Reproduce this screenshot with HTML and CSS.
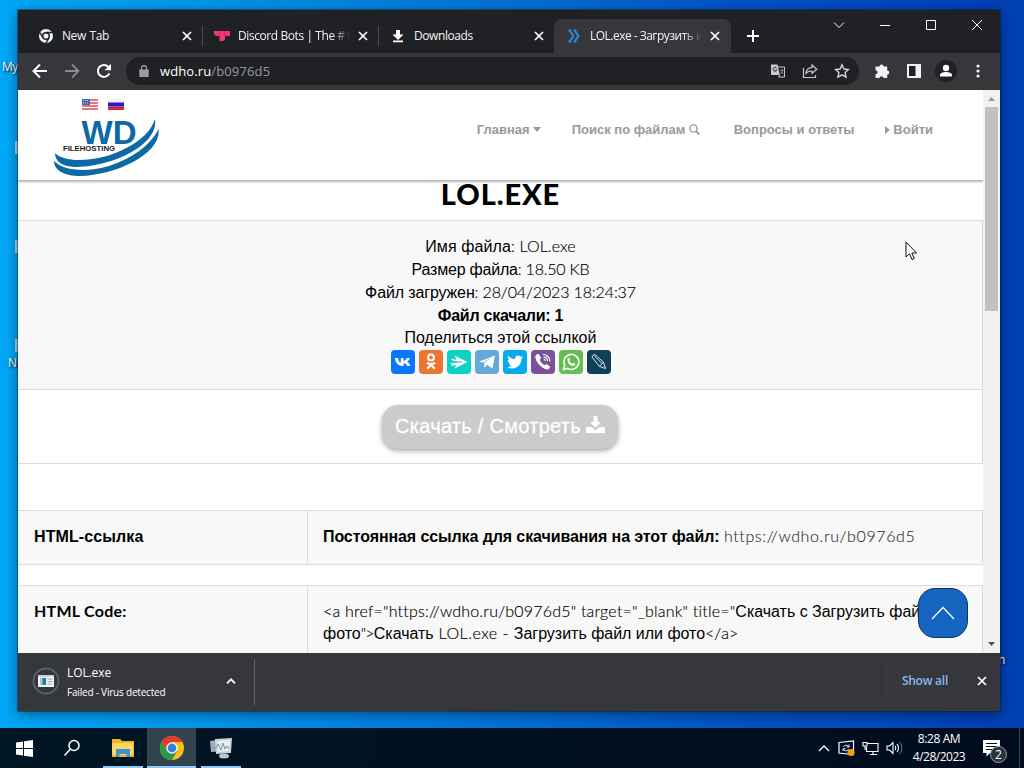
FILE: index.html
```
<!DOCTYPE html>
<html lang="ru">
<head>
    <meta charset="utf-8">
    <title>LOL.exe - Загрузить файл</title>
    <link rel="stylesheet" href="styles.css">
</head>
<body>
<div class="desktop">
    <span class="desk-label label-my">My</span>
    <span class="desk-label label-n">N</span>
    <span class="desk-label label-right">n</span>
    <i class="desk-sliver sliver-1"></i>
    <i class="desk-sliver sliver-2"></i>
    <i class="desk-sliver sliver-3"></i>

    <div class="window">
        <div class="tabstrip">
            <div class="tab">
                <svg class="tab-icon" viewBox="0 0 16 16"><circle cx="8" cy="8" r="7" fill="#f1f3f4"/><circle cx="8" cy="8" r="3.3" fill="#f1f3f4" stroke="#202124" stroke-width="1.5"/><path d="M8 4.500h7M4.900 9.700L1.500 4M11 9.800L7.600 15.500" stroke="#202124" stroke-width="1.4"/></svg>
                <span class="tab-title t-new">New Tab</span>
                <svg class="close" viewBox="0 0 10 10"><path d="M1 1l8 8M9 1L1 9"/></svg>
            </div>
            <div class="tab split">
                <svg class="tab-icon" viewBox="0 0 16 16"><path d="M0 3h16v5h-5v3.500L9.500 13H5.500V8H2L0 6z" fill="#f03a70"/><path d="M5.500 3v5M11 3v5" stroke="#bb2354" stroke-width=".7"/></svg>
                <span class="tab-title fade t-discord">Discord Bots | The #1</span>
                <svg class="close" viewBox="0 0 10 10"><path d="M1 1l8 8M9 1L1 9"/></svg>
            </div>
            <div class="tab split">
                <svg class="tab-icon" viewBox="0 0 16 16"><path d="M6 2h4v4.500h3.500L8 12 2.500 6.500H6zM3 12.500h10v1.800H3z" fill="#fff"/></svg>
                <span class="tab-title t-down">Downloads</span>
                <svg class="close" viewBox="0 0 10 10"><path d="M1 1l8 8M9 1L1 9"/></svg>
            </div>
            <div class="tab active">
                <svg class="tab-icon" viewBox="0 0 16 16"><path d="M3 1.500L7.500 8 3 14.500M8 1.500L12.500 8 8 14.500" fill="none" stroke="#2a86cf" stroke-width="2.200"/></svg>
                <span class="tab-title fade t-lol">LOL.exe - Загрузить и</span>
                <svg class="close" viewBox="0 0 10 10"><path d="M1 1l8 8M9 1L1 9"/></svg>
            </div>
            <svg class="new-tab" viewBox="0 0 12 12"><path d="M6 0v12M0 6h12" stroke="#fff" stroke-width="2"/></svg>
            <div class="caption">
                <svg viewBox="0 0 46 30"><path d="M18 12.500l5 5 5-5"/></svg>
                <svg viewBox="0 0 46 30"><path d="M18 15.500h10"/></svg>
                <svg viewBox="0 0 46 30"><path d="M18.500 10.500h9v9h-9z"/></svg>
                <svg viewBox="0 0 46 30"><path d="M18 10l10 10M28 10L18 20"/></svg>
            </div>
        </div>

        <div class="toolbar">
            <svg class="nav" viewBox="0 0 16 16"><path d="M15 8H2M8 1.500L1.500 8 8 14.500" fill="none" stroke="#fff" stroke-width="2"/></svg>
            <svg class="nav" viewBox="0 0 16 16"><path d="M1 8h13M8 1.500L14.500 8 8 14.500" fill="none" stroke="#8a8b8e" stroke-width="1.800"/></svg>
            <svg class="nav" viewBox="0 0 16 16"><path d="M13.300 10.500A6 6 0 1 1 12.300 3.800" fill="none" stroke="#fff" stroke-width="2"/><path d="M15 .8v6.400H8.600z" fill="#fff"/></svg>
            <div class="omnibox">
                <svg class="lock" viewBox="0 0 10 12"><path d="M2.500 5V3a2.500 2.500 0 0 1 5 0v2" fill="none" stroke="#9b9da0" stroke-width="1.300"/><path d="M1 4.500h8a.7.7 0 0 1 .7.700v6a.7.700 0 0 1-.7.700H1a.7.700 0 0 1-.7-.7v-6a.7.700 0 0 1 .7-.7z" fill="#9b9da0"/></svg>
                <span class="url"><b>wdho.ru</b>/b0976d5</span>
                <svg class="omni-icon" viewBox="0 0 16 16"><path d="M1 1.500h6.500L9.800 12H1z" fill="#c7c9cc"/><path d="M8 4h6.500v10H8.500l1.300-2" fill="none" stroke="#c7c9cc"/><path d="M6.500 5a2 2 0 1 0 .3 2H5" fill="none" stroke="#303134"/><path d="M10 7h3.500M12.500 7c0 1.500-1 3-2 4M11 8.500l2.500 2.500" fill="none" stroke="#aaa" stroke-width=".8"/></svg>
                <svg class="omni-icon" viewBox="0 0 16 16"><path d="M1.500 5v9.500h12V12M10 2l4.800 4.200L10 10.500V8C7 8 5 8.800 3.800 11 4 7 6.500 4.800 10 4.400z" fill="none" stroke="#c7c9cc" stroke-width="1.200"/></svg>
                <svg class="omni-icon" viewBox="0 0 16 16"><path d="M8 1.800l1.900 4.200 4.500.5-3.300 3.100.9 4.500-4-2.300-4 2.300.9-4.500L1.600 6.500 6.100 6z" fill="none" stroke="#d2d4d6" stroke-width="1.400"/></svg>
            </div>
            <svg class="ext" viewBox="0 0 16 16"><path d="M1.500 3.500h4a2.100 2.100 0 1 1 4.200 0h3.500v4a2.100 2.100 0 1 1 0 4.200V15H9.700a2.200 2.200 0 0 0-4.300 0H1.500v-3.700a2 2 0 0 0 0-4z" fill="#f1f3f4"/></svg>
            <svg class="ext side" viewBox="0 0 16 16"><path d="M2 2h12v12H2z" fill="#202124" stroke="#f1f3f4" stroke-width="2"/><path d="M9.500 1H15v14H9.500z" fill="#f1f3f4"/></svg>
            <svg class="avatar" viewBox="0 0 22 22"><circle cx="11" cy="11" r="11" fill="#202124"/><circle cx="11" cy="8" r="3.200" fill="#fff"/><path d="M5 16.500v-1.300c0-2.200 3-3.200 6-3.200s6 1 6 3.200v1.300z" fill="#fff"/></svg>
            <svg class="dots" viewBox="0 0 4 16"><circle cx="2" cy="3" r="1.600"/><circle cx="2" cy="8" r="1.600"/><circle cx="2" cy="13" r="1.600"/></svg>
        </div>

        <div class="viewport">
            <div class="page">
                <div class="site-header">
                    <svg class="logo" viewBox="0 0 108 84">
                        <g>
                            <path d="M29 4h16v11H29z" fill="#fff"/><path d="M29 5h16M29 8h16M29 11h16M29 14h16" stroke="#dc4b50" stroke-width="1.500"/><path d="M29 4h8v6h-8z" fill="#4069b4"/><path d="M30 5.500h6M30 8h6" stroke="#dfe7f6" stroke-width=".8" stroke-dasharray="1 1"/>
                            <path d="M55 4h16v11H55z" fill="#f1f1f6"/><path d="M55 7.500h16v4H55z" fill="#2519d8"/><path d="M55 11.500h16V15H55z" fill="#d92035"/>
                        </g>
                        <text x="28.500" y="49" class="wd" textLength="55" lengthAdjust="spacingAndGlyphs">WD</text>
                        <text x="10" y="56" class="fh" textLength="52" lengthAdjust="spacingAndGlyphs">FILEHOSTING</text>
                        <path d="M102 24C97 40 79 53 54 61 32 66.500 11 67 2 58 2 67 10 72 24 72 62 71 106 49 102 24z" fill="#0d69a5"/>
                        <path d="M105.500 34C98 50 78 64 56 71 33 77.500 11 76 1 66 1 75 11 81 27 81 64 80 109 58 105.500 34z" fill="#0d69a5"/>
                    </svg>
                    <nav class="menu">
                        <span class="m-home">Главная <svg class="caret" viewBox="0 0 8 5"><path d="M0 0h8L4 5z"/></svg></span>
                        <span class="m-search">Поиск по файлам <svg class="mag" viewBox="0 0 11 11"><circle cx="4.500" cy="4.500" r="3.600" fill="none" stroke="#999" stroke-width="1.400"/><path d="M7 7l3.500 3.500" stroke="#999" stroke-width="1.800"/></svg></span>
                        <span class="m-faq">Вопросы и ответы</span>
                        <span class="m-login"><svg class="tri" viewBox="0 0 5 8"><path d="M0 0l5 4-5 4z"/></svg> Войти</span>
                    </nav>
                </div>
                <h1><span>LOL.EXE</span></h1>
                <div class="info">
                    <p class="p-name">Имя файла<span class="lat">: LOL.exe</span></p>
                    <p class="p-size">Размер файла<span class="lat">: 18.50 KB</span></p>
                    <p class="p-date">Файл загружен<span class="lat">: 28/04/2023 18:24:37</span></p>
                    <p class="p-count"><b>Файл скачали: 1</b></p>
                    <p class="share-title">Поделиться этой ссылкой</p>
                    <div class="share">
                        <svg class="vk" viewBox="0 0 24 24"><path d="M4 8h3.200c.1 3 1.400 4.500 2.600 4.800V8h2.800v2.900c1.400-.2 2.600-1.500 3.100-2.900h3.100c-.4 1.700-1.600 3-2.600 3.700 1 .5 2.600 1.800 3.300 4.300h-3.200c-.5-1.400-1.800-2.500-3.700-2.700V16C7.500 16.300 4.200 13 4 8z" fill="#fff"/></svg>
                        <svg class="ok" viewBox="0 0 24 24" fill="none" stroke="#fff" stroke-width="2"><circle cx="12" cy="7.500" r="2.900"/><path d="M7.800 12.800c2.800 1.700 5.600 1.700 8.400 0M8.300 18.800l3.700-4 3.700 4"/></svg>
                        <svg class="mm" viewBox="0 0 24 24"><path d="M7.500 5.500l13 6.500-13 6.500 2-4.500H4v-1.200h9L4.500 10V8.500l5 1.500z" fill="#fff"/><path d="M4.500 15.500l8-2.500" stroke="#fff" stroke-width="1.500"/><path d="M5 11.400l10 .6-10 .9" stroke="#0bd2c3" stroke-width=".6" fill="none"/></svg>
                        <svg class="tg" viewBox="0 0 24 24"><path d="M4 11.700L20 5.500l-2.700 13-5-3.700-2.800 2.600-.6-4.600 7.600-5.200-9 5z" fill="#fff"/></svg>
                        <svg class="tw" viewBox="0 0 24 24"><path d="M20 7.500l-1.700 1.700C18.500 15 13.500 18.500 9.500 18.500c-2 0-3.800-.5-5.300-1.500 1.800.1 3.300-.3 4.500-1.300-1.500-.2-2.500-1-3-2.200h1.300C5.500 12.500 4.700 11.300 4.700 9.700l1.500.4C4.800 8.800 4.700 7.200 5.400 5.800 7.200 7.900 9.400 9 12 9.200 11.600 6 15.300 4.400 17.400 6.600l2.100-.8-1.300 1.900z" fill="#fff"/></svg>
                        <svg class="vb" viewBox="0 0 24 24"><path d="M5.500 4.500l2.200-.5 2.500 4-1.500 1.800c.8 2.300 2.200 4 4.700 5.400l1.900-1.300 3.700 2.600c-.3 2.200-1.600 3.300-3.400 2.900C10.500 18.200 5 12.500 4.200 6.500z" fill="#fff"/><path d="M12 4.500c4 .1 7 3 7 7M12.500 7c2.500.1 4 1.600 4 4M12.700 9.200c1 .1 1.600.7 1.700 1.700" fill="none" stroke="#fff" stroke-width="1.200"/></svg>
                        <svg class="wa" viewBox="0 0 24 24"><path d="M4.500 19.500l1.200-4.200A7.500 7.500 0 1 1 8.700 18.400z" fill="none" stroke="#fff" stroke-width="1.500"/><path d="M8.500 8h1.800l.9 2.200-.8 1.100c.6 1.100 1.500 1.900 2.600 2.500l1.100-1.100 2.100 1c0 1.500-.9 2.300-2.300 2.200-3.200-.4-5.200-3-5.400-5.700z" fill="#fff"/></svg>
                        <svg class="lj" viewBox="0 0 24 24"><path d="M5 7c.4-1.500 1.500-2.300 3-2.500l8.500 7.700 2 6.300-6.200-2.200zM16.500 12.200l-4.200 4.100M7 5.500l8 8" fill="none" stroke="#dce6eb"/></svg>
                    </div>
                </div>
                <div class="action">
                    <a class="download"><span>Скачать / Смотреть</span>
                        <svg viewBox="0 0 19 18"><path d="M7.500 0h4v6H15l-5.500 5.500L4 6h3.500z" fill="#fff"/><path d="M0 11h5.500l4 3.500 4-3.500H19v6H0z" fill="#fff"/></svg>
                    </a>
                </div>
                <div class="row link-row">
                    <div class="cell-name"><b class="k-link">HTML-ссылка</b></div>
                    <div class="cell-value"><b class="k-perm">Постоянная ссылка для скачивания на этот файл:</b> <span class="lat link">https://wdho.ru/b0976d5</span></div>
                </div>
                <div class="row code-row">
                    <div class="cell-name"><b class="lat-b">HTML Code:</b></div>
                    <div class="cell-value"><span class="lat code-a">&lt;a href="https://wdho.ru/b0976d5" target="_blank" title="</span><span class="cyr">Скачать с Загрузить файл</span><br><span class="cyr">фото</span><span class="lat code-q">"&gt;</span><span class="cyr">Скачать</span><span class="lat code-b"> LOL.exe - </span><span class="cyr">Загрузить файл или фото</span><span class="lat">&lt;/a&gt;</span></div>
                </div>
                <a class="to-top"><svg viewBox="0 0 24 14"><path d="M1 13L12 1.500 23 13" fill="none" stroke="#fff" stroke-width="1.300"/></svg></a>
            </div>
            <div class="scrollbar">
                <svg viewBox="0 0 17 17"><path d="M5 11l3.500-4 3.500 4z" fill="#9a9a9a"/></svg>
                <div class="thumb"></div>
                <svg class="down" viewBox="0 0 17 17"><path d="M5 6h7l-3.500 4z" fill="#505050"/></svg>
            </div>
        </div>

        <div class="shelf">
            <svg class="file-icon" viewBox="0 0 28 28"><circle cx="14" cy="14" r="12.500" fill="none" stroke="#576373" stroke-width="1.800"/><path d="M6 8h16v12H6z" fill="#f2f5f7"/><path d="M6 8h16v2H6z" fill="#c5d2da"/><path d="M8 11h6v7H8z" fill="#237e9d"/><path d="M8 11h2.500v7H8z" fill="#9bcbdc"/><path d="M15.500 12h5M15.500 14.500h5M15.500 17h5" stroke="#8aa2b1"/></svg>
            <div class="file">
                <div class="file-name">LOL.exe</div>
                <div class="file-state">Failed - Virus detected</div>
            </div>
            <svg class="chev" viewBox="0 0 10 6"><path d="M1 5.300L5 1.300l4 4" fill="none" stroke="#fff" stroke-width="1.700"/></svg>
            <span class="shelf-line"></span>
            <span class="show-all"><span>Show all</span></span>
            <svg class="close" viewBox="0 0 10 10"><path d="M1 1l8 8M9 1L1 9"/></svg>
        </div>
    </div>

    <svg class="cursor" viewBox="0 0 13 20"><path d="M1 1v15l3.500-3.300L7 18.500l2.300-1-2.500-5.500h4.700z" fill="#fff" stroke="#111"/></svg>

    <div class="taskbar">
        <div class="task"><svg width="17" height="17" viewBox="0 0 17 17"><path d="M0 2.500l7-1V8H0zM8 1.300L17 0v8H8zM0 9h7v6.500l-7-1zM8 9h9v8l-9-1.300z" fill="#fff"/></svg></div>
        <div class="task search"><svg width="18" height="18" viewBox="0 0 18 18"><circle cx="11" cy="6.500" r="5" fill="none" stroke="#fff" stroke-width="1.500"/><path d="M7.500 10L1.500 16.500" stroke="#fff" stroke-width="1.500"/></svg></div>
        <div class="task open"><svg width="24" height="20" viewBox="0 0 24 20"><path d="M1 1h8l2 2h12v16H1z" fill="#f0b52e"/><path d="M1 5h21v12H1z" fill="#ffd666"/><path d="M5 11h14v8h-3.500v-3h-7v3H5z" fill="#3d95cc"/></svg></div>
        <div class="task open current"><svg width="24" height="24" viewBox="0 0 24 24"><circle cx="12" cy="12" r="12" fill="#fbc116"/><path d="M1.600 6A12 12 0 0 1 22.400 6H12L6.800 15z" fill="#e33b2e"/><path d="M1.600 6A12 12 0 0 0 12 24l5.200-9H12l-5.200 0z" fill="#27994a"/><circle cx="12" cy="12" r="5.700" fill="#fff"/><circle cx="12" cy="12" r="4.400" fill="#367de2"/></svg></div>
        <div class="task open"><svg width="24" height="22" viewBox="0 0 24 22"><path d="M1 4l14-2 1 12-14 1z" fill="#a3b1b6"/><path d="M6 2l17-1-1 15-15 1z" fill="#c9d4d8"/><path d="M8 4l13-1-1 11-11 1z" fill="#e6eef0"/><path d="M3 11h4l2-4 3 6 2-7 2 6 2-3 2 3" fill="none" stroke="#7b96a0"/><ellipse cx="15" cy="19" rx="5" ry="2.500" fill="#bcc7cb"/></svg></div>
        <div class="tray">
            <svg width="12" height="8" viewBox="0 0 12 8"><path d="M1 7l5-5 5 5" fill="none" stroke="#fff" stroke-width="1.300"/></svg>
            <svg width="17" height="16" viewBox="0 0 17 16"><path d="M1 2.500L15.500 1v13.500L1 13z" fill="none" stroke="#fff" stroke-width="1.200"/><path d="M11 4.500V7H8.500M5 11V8.800h2.500M5.300 7c1-2 3.700-2.500 5.300-.5M10.700 9c-1 2-3.700 2.500-5.300.5" fill="none" stroke="#fff"/><circle cx="13" cy="12.500" r="3.500" fill="#f79a18"/></svg>
            <svg width="17" height="16" viewBox="0 0 17 16"><path d="M5 3.500h11v8H4.500V7M8 14.500h7M11 11.500v3M1 2.500h4V6H1zM3 6v4" fill="none" stroke="#fff" stroke-width="1.100"/></svg>
            <svg width="17" height="14" viewBox="0 0 17 14"><path d="M1 5h2.500L7 1.500v11L3.500 9H1z" fill="none" stroke="#fff" stroke-width="1.100"/><path d="M9 5c1 1 1 3 0 4M11 3c2 2 2 6 0 8" fill="none" stroke="#fff" stroke-width="1.100"/><path d="M13.500 1c3 3 3 9 0 12" fill="none" stroke="#7c858d"/></svg>
        </div>
        <div class="clock"><span class="time">8:28 AM</span><span class="day">4/28/2023</span></div>
        <div class="notify">
            <svg width="17" height="17" viewBox="0 0 17 17"><path d="M0 0h17v13H7l-3.500 3.500V13H0z" fill="#fff"/><path d="M3 3.500h11M3 6.500h11M3 9.500h7" stroke="#000c1e"/></svg>
            <span class="badge">2</span>
        </div>
    </div>
</div>
</body>
</html>
```
FILE: styles.css
```
body {
    margin: 0;
    overflow: hidden;
    font-family: "Open Sans", sans-serif;
}
* {
    box-sizing: border-box;
}
svg {
    display: block;
    flex: none;
}
.desktop {
    position: relative;
    width: 1024px;
    height: 768px;
    overflow: hidden;
    background: linear-gradient(90deg, #00a6f6 0, #009bed 15%, #0078d8 45%, #0056c6 70%, #0044ba 92%, #003eb4 100%);
}
.desk-label {
    position: absolute;
    color: #fff;
    font-size: 12px;
    line-height: 14px;
    text-shadow: 1px 1px 2px #000;
}
.label-my { left: 2px; top: 60px; letter-spacing: -.5px; }
.label-n { left: 8px; top: 356px; }
.label-right { left: 998px; top: 653px; }
.desk-sliver {
    position: absolute;
    left: 15px;
    width: 3px;
    height: 13px;
    background: #a5d5ee;
}
.sliver-1 { top: 141px; }
.sliver-2 { top: 240px; }
.sliver-3 { top: 339px; }

/* browser window */
.window {
    position: absolute;
    left: 18px;
    top: 10px;
    width: 982px;
    height: 701px;
    display: flex;
    flex-direction: column;
    background: #fff;
    box-shadow: 0 0 0 1px rgba(10, 30, 50, .45), 0 3px 12px rgba(0, 0, 0, .45);
}
.tabstrip {
    height: 43px;
    padding: 9px 0 0 8px;
    display: flex;
    background: #202124;
}
.tab {
    position: relative;
    width: 176px;
    height: 34px;
    padding: 0 10px 0 12px;
    display: flex;
    align-items: center;
    color: #f1f3f4;
    font-size: 12px;
}
.tab.split {
    padding-left: 11px;
}
.tab.split::before {
    content: '';
    width: 1px;
    height: 20px;
    margin: 0 0 0 -11px;
    background: #4a4c50;
}
.tab.split .tab-icon {
    margin-left: 11px;
}
.tab.active {
    width: 177px;
    padding-right: 11px;
    background: #36373a;
    border-radius: 8px 8px 0 0;
}
.tab-icon {
    width: 16px;
    height: 16px;
}
.tab-title {
    width: 113px;
    margin: -1px 0 0 8px;
    overflow: hidden;
    white-space: nowrap;
}
.tab.split .tab-title,
.tab.active .tab-title {
    width: 112px;
}
.t-new { letter-spacing: -.8px; word-spacing: 1px; }
.t-new, .t-discord, .t-down { letter-spacing: -.42px; }
.t-lol { letter-spacing: -.52px; }
.fade {
    -webkit-mask-image: linear-gradient(90deg, #000 84%, transparent 100%);
    mask-image: linear-gradient(90deg, #000 84%, transparent 100%);
}
.close {
    width: 10px;
    height: 10px;
    margin-left: auto;
    fill: none;
    stroke: #fff;
    stroke-width: 1.7;
}
.new-tab {
    width: 12px;
    height: 12px;
    margin: 11px 0 0 16px;
}
.caption {
    display: flex;
    margin: -9px 0 0 auto;
}
.caption svg {
    width: 46px;
    height: 30px;
    fill: none;
    stroke: #fff;
}
.toolbar {
    height: 37px;
    padding: 0 20px 2px 14px;
    display: flex;
    align-items: center;
    background: #36373a;
}
.nav {
    width: 16px;
    height: 16px;
    margin-right: 16px;
}
.omnibox {
    width: 733px;
    height: 28px;
    margin-left: -2px;
    padding: 0 9px 0 13px;
    display: flex;
    align-items: center;
    background: #202124;
    border-radius: 14px;
}
.lock {
    width: 10px;
    height: 12px;
}
.url {
    margin: 0 auto 0 11px;
    font-size: 13px;
    color: #96999d;
    letter-spacing: .15px;
}
.url b {
    color: #fff;
    font-weight: 500;
    letter-spacing: .1px;
}
.omni-icon {
    width: 16px;
    height: 16px;
    margin-left: 16px;
}
.ext {
    width: 16px;
    height: 16px;
    margin-left: 15px;
}
.ext.side {
    margin-left: 16px;
}
.avatar {
    width: 22px;
    height: 22px;
    margin-left: 13px;
}
.dots {
    width: 4px;
    height: 16px;
    margin-left: auto;
    fill: #f1f3f4;
}

/* page */
.viewport {
    height: 563px;
    display: flex;
    overflow: hidden;
}
.page {
    position: relative;
    width: 965px;
    overflow: hidden;
    color: #000;
    font: 16px/23px "Liberation Sans", sans-serif;
}
.site-header {
    height: 91px;
    display: flex;
    padding: 5px 50px 0 35px;
    border-bottom: 1px solid #bcbcbc;
    box-shadow: 0 1px 2px rgba(0, 0, 0, .3);
}
.logo {
    width: 108px;
    height: 84px;
}
.wd {
    font: bold 34px "Liberation Sans", sans-serif;
    fill: #0d69a5;
}
.fh {
    font: bold 8px "Liberation Sans", sans-serif;
    fill: #222;
}
.menu {
    display: flex;
    margin: 23px 0 0 auto;
    color: #999;
    font-size: 13px;
    font-weight: bold;
}
.menu span {
    white-space: nowrap;
}
.menu svg {
    display: inline-block;
    fill: #999;
}
.m-home { width: 95px; }
.m-search { width: 162px; }
.m-faq { width: 151px; }
.caret { width: 8px; height: 5px; vertical-align: 2px; }
.mag { width: 11px; height: 11px; vertical-align: -1px; }
.tri { width: 5px; height: 8px; }
h1 {
    height: 39px;
    margin: 0;
    text-align: center;
    font: 900 29px/25px Lato, sans-serif;
    letter-spacing: .9px;
}
.lat {
    font-family: Lato, sans-serif;
    font-weight: 300;
    line-height: 0;
    -webkit-text-stroke: .15px;
}
.info {
    height: 170px;
    padding: 14px 0 0 1px;
    border: 1px solid #dcdcdc;
    border-left: 0;
    background: #f8f8f8;
    text-align: center;
}
.info p {
    margin: 0;
}
.info .share-title {
    line-height: 22px;
}
.p-name { letter-spacing: .1px; }
.p-size { letter-spacing: -.2px; }
.p-date { letter-spacing: -.13px; }
.p-count { letter-spacing: -.25px; }
.share {
    display: flex;
    justify-content: center;
    gap: 4px;
    margin-top: 1px;
}
.share svg {
    width: 24px;
    height: 24px;
    border-radius: 4px;
}
.vk { background: #0777ff; }
.ok { background: #ed7530; }
.mm { background: #0bd2c3; }
.tg { background: #65a9dc; }
.tw { background: #05aaee; }
.vb { background: #7b519d; }
.wa { background: #65bd53; }
.lj { background: #0e4058; }
.action {
    height: 74px;
    padding-top: 15px;
    border-bottom: 1px solid #dcdcdc;
    border-right: 1px solid #dcdcdc;
}
.download {
    width: 236px;
    height: 44px;
    margin: 0 auto;
    display: flex;
    align-items: center;
    justify-content: center;
    gap: 5px;
    border-radius: 16px;
    background: #cbcbcb;
    box-shadow: 0 2px 5px rgba(0, 0, 0, .35);
    color: #fff;
    font-size: 20px;
    -webkit-text-stroke: .3px #fff;
}
.download span {
    margin-top: -2px;
    letter-spacing: .28px;
}
.download svg {
    width: 19px;
    height: 18px;
    margin-top: -4px;
}
.row {
    display: flex;
    border: 1px solid #dcdcdc;
    border-left: 0;
    background: #f8f8f8;
    white-space: nowrap;
}
.link-row {
    height: 55px;
    margin-top: 46px;
}
.code-row {
    height: 100px;
    margin-top: 20px;
    line-height: 22px;
}
.cell-name {
    width: 290px;
    padding: 14px 16px;
    border-right: 1px solid #dcdcdc;
}
.cell-value {
    padding: 14px 15px;
}
.code-row .cell-value {
    padding-top: 15px;
}
.k-link { letter-spacing: .1px; }
.k-perm { letter-spacing: -.1px; }
.link {
    color: #333;
    letter-spacing: .61px;
}
.lat-b {
    font-family: Lato, sans-serif;
    letter-spacing: .25px;
}
.code-a,
.code-b,
.code-q {
    letter-spacing: .2px;
}
.code-q { letter-spacing: -.8px; }
.code-b { letter-spacing: .5px; }
.cyr { letter-spacing: -.02px; }
.to-top {
    position: absolute;
    left: 900px;
    top: 498px;
    width: 50px;
    height: 50px;
    display: flex;
    align-items: center;
    justify-content: center;
    border: 1px solid #0c3765;
    border-radius: 17px;
    background: #1565c0;
}
.to-top svg {
    width: 24px;
    height: 14px;
}
.scrollbar {
    width: 17px;
    display: flex;
    flex-direction: column;
    background: #f1f1f1;
}
.scrollbar svg {
    width: 17px;
    height: 17px;
}
.thumb {
    width: 13px;
    height: 204px;
    margin: 0 2px;
    background: #c1c1c1;
}
.scrollbar .down {
    margin-top: auto;
}

/* download shelf */
.shelf {
    height: 58px;
    padding: 0 13px 3px 14px;
    display: flex;
    align-items: center;
    background: #36373a;
    color: #fff;
}
.file-icon {
    width: 28px;
    height: 28px;
}
.file {
    width: 159px;
    margin: 3px 0 0 7px;
}
.file-name {
    font-size: 12px;
    line-height: 18px;
    letter-spacing: -.1px;
}
.file-state {
    padding-top: 1px;
    font-size: 10px;
    line-height: 18px;
    letter-spacing: -.2px;
}
.chev {
    width: 10px;
    height: 6px;
}
.shelf-line {
    width: 1px;
    height: 46px;
    margin: 3px 0 0 18px;
    background: #64666a;
}
.show-all {
    height: 28px;
    margin-left: auto;
    padding: 0 17px 0 15px;
    border-left: 1px solid #414246;
    color: #8ab4f8;
    font-size: 12px;
    font-weight: 600;
    line-height: 28px;
    letter-spacing: -.25px;
}
.shelf .close {
    margin-left: 12px;
}
.cursor {
    position: absolute;
    left: 905px;
    top: 241px;
    width: 13px;
    height: 20px;
}

/* taskbar */
.taskbar {
    position: absolute;
    left: 0;
    top: 728px;
    width: 1024px;
    height: 40px;
    display: flex;
    background: linear-gradient(90deg, #001624, #000c1e);
    color: #fff;
}
.task {
    width: 49px;
    display: flex;
    align-items: center;
    justify-content: center;
}
.task.search {
    padding-right: 3px;
}
.task.open::after {
    content: '';
    position: absolute;
    width: 40px;
    height: 2px;
    margin-top: 38px;
    background: #8fc9f5;
}
.task.current {
    width: 49px;
    background: #33444f;
}
.task.current::after {
    width: 49px;
}
.tray {
    margin: 0 1px 0 auto;
    display: flex;
    align-items: center;
    gap: 7px;
}
.tray svg:first-child {
    margin-right: 1px;
}
.clock {
    width: 70px;
    display: flex;
    flex-direction: column;
    align-items: center;
    padding-top: 2px;
    font-size: 12px;
    line-height: 18px;
    letter-spacing: -.4px;
}
.day {
    letter-spacing: -.5px;
}
.notify {
    position: relative;
    width: 50px;
    padding: 12px 0 0 9px;
}
.notify::after {
    content: '';
    position: absolute;
    right: 4px;
    top: 0;
    width: 1px;
    height: 40px;
    background: #3b4552;
}
.badge {
    position: absolute;
    left: 16px;
    top: 18px;
    width: 17px;
    height: 17px;
    border: 1px solid #99a0a8;
    border-radius: 50%;
    background: #2a323d;
    font-size: 12px;
    line-height: 15px;
    text-align: center;
}
```
